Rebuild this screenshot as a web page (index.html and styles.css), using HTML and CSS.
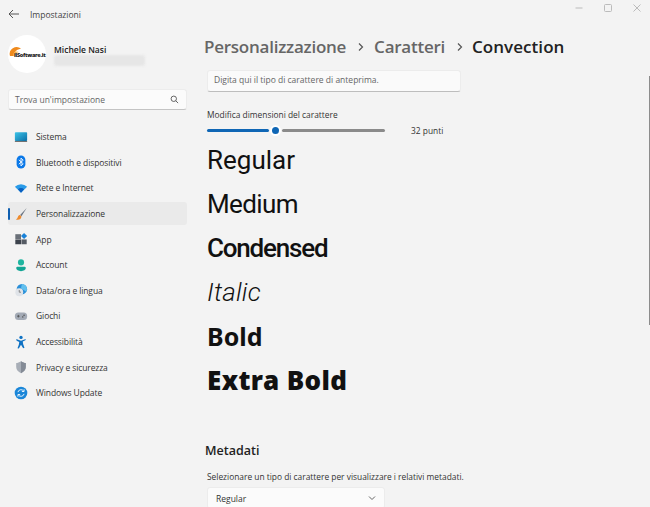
FILE: index.html
```html
<!DOCTYPE html>
<html lang="it">
<head>
    <meta charset="UTF-8">
    <title>Impostazioni</title>
    <link rel="stylesheet" href="styles.css">
</head>
<body>
    <div class="window">
        <header class="titlebar">
            <svg class="back" width="12" height="10" viewBox="0 0 12 10"><path d="M5 1 1 5l4 4M1 5h10" fill="none" stroke="#555" stroke-width="1"/></svg>
            <span class="app-name">Impostazioni</span>
            <div class="controls">
                <svg width="10" height="10" viewBox="0 0 10 10"><path d="M1.500 5h7" stroke="#bbb"/></svg>
                <svg width="10" height="10" viewBox="0 0 10 10"><rect x="1.500" y="1.500" width="7" height="7" rx="1" fill="none" stroke="#bbb"/></svg>
                <svg width="10" height="10" viewBox="0 0 10 10"><path d="M1.500 1.500l7 7M8.500 1.500l-7 7" stroke="#bbb"/></svg>
            </div>
        </header>
        <div class="columns">
            <aside class="sidebar">
                <div class="profile">
                    <div class="avatar">
                        <svg width="38" height="38" viewBox="0 0 38 38">
                            <path d="M2 21a7 7 0 0 1 11-7.500L9 15l-2.500 2.500L5.500 21z" fill="#ef8a1d"/>
                            <path d="M5 21a4 4 0 0 1 6-4l-3 1-1 3z" fill="#f5b04a"/>
                        </svg>
                        <span class="logo-text">ilSoftware.it</span>
                    </div>
                    <div class="who">
                        <span class="who-name">Michele Nasi</span>
                        <span class="who-mail"></span>
                    </div>
                </div>
                <div class="search">
                    <span>Trova un'impostazione</span>
                    <svg width="9" height="9" viewBox="0 0 10 10"><circle cx="4.200" cy="4.200" r="3" fill="none" stroke="#555"/><path d="M6.400 6.400 9 9" stroke="#555"/></svg>
                </div>
                <nav class="nav">
                    <a class="nav-item"><svg width="14" height="14" viewBox="0 0 16 16"><defs><linearGradient id="g1" x1="0" y1="0" x2="1" y2="1"><stop offset="0" stop-color="#3cc4e8"/><stop offset="1" stop-color="#0a6fa8"/></linearGradient></defs><rect x="1" y="2.500" width="14" height="10" rx="1" fill="url(#g1)"/><rect x="1" y="12.500" width="14" height="1" fill="#555"/></svg>Sistema</a>
                    <a class="nav-item"><svg width="14" height="14" viewBox="0 0 16 16"><rect x="3" y="0.500" width="10" height="15" rx="5" fill="#0a78e8"/><path d="M5.500 5.500l5 4.500L8 12.500v-9l2.500 2.500-5 4.500" fill="none" stroke="#fff"/></svg>Bluetooth e dispositivi</a>
                    <a class="nav-item"><svg width="14" height="14" viewBox="0 0 16 16"><path d="M1 6.500a10 10 0 0 1 14 0L8 13.500z" fill="#2a9be8"/><path d="M4.500 9.500a5 5 0 0 1 7 0L8 13.500z" fill="#0a5fc0"/></svg>Rete e Internet</a>
                    <a class="nav-item active"><svg width="14" height="14" viewBox="0 0 16 16"><path d="M14.500 1 7 9l1.500 1.500z" fill="#6a7482"/><path d="M6.500 9C4 9.500 5 13 2 14c3 1.500 6.500 0 6.500-3.500z" fill="#ee8a2c"/></svg>Personalizzazione</a>
                    <a class="nav-item"><svg width="14" height="14" viewBox="0 0 16 16"><rect x="1.500" y="2.500" width="6.500" height="5.500" fill="#6a7078"/><rect x="1.500" y="8.500" width="6.500" height="5.500" fill="#3d434c"/><rect x="8.500" y="8.500" width="6" height="5.500" fill="#555b64"/><path d="M11.500 1 15 4.500 11.500 8 8 4.500z" fill="#1a82d8"/></svg>App</a>
                    <a class="nav-item"><svg width="14" height="14" viewBox="0 0 16 16"><circle cx="8" cy="5" r="3.500" fill="#1fb5a0"/><path d="M2.500 11.500c0-1 1-1.500 2-1.500h7c1 0 2 .5 2 1.500 0 2-2.500 3.500-5.500 3.500s-5.500-1.500-5.500-3.500z" fill="#12a594"/></svg>Account</a>
                    <a class="nav-item"><svg width="14" height="14" viewBox="0 0 16 16"><circle cx="9" cy="7" r="6" fill="#2a8fd8"/><path d="M9 1a6 6 0 0 1 5 9L8 6z" fill="#62c0ee"/><circle cx="6" cy="10.500" r="4.500" fill="#dfe3e8"/><path d="M6 8v2.500h2" fill="none" stroke="#666" stroke-width=".8"/></svg>Data/ora e lingua</a>
                    <a class="nav-item"><svg width="14" height="14" viewBox="0 0 16 16"><rect x="1" y="4" width="14" height="8.500" rx="4" fill="#a3aab5"/><path d="M3.500 8.200h3M5 6.700v3" stroke="#444" stroke-width=".8"/><circle cx="11.500" cy="7.200" r=".8" fill="#444"/><circle cx="10" cy="9" r=".8" fill="#444"/></svg>Giochi</a>
                    <a class="nav-item"><svg width="14" height="14" viewBox="0 0 16 16"><circle cx="8" cy="2.800" r="1.900" fill="#0f72c4"/><path d="M2.500 4.500 8 6.500l5.500-2-.5 1.500-3 1.500.5 3 1.500 4-1.500.5L8 11l-2.500 4.500L4 15l1.500-4 .5-3-3-1.500z" fill="#0f72c4"/></svg>Accessibilità</a>
                    <a class="nav-item"><svg width="14" height="14" viewBox="0 0 16 16"><path d="M8 1.500c2 1.500 4 2 5.500 2v4.500c0 3.500-2.500 5.500-5.500 7-3-1.500-5.500-3.500-5.500-7V3.500c1.500 0 3.500-.5 5.500-2z" fill="#a8aeb7"/><path d="M8 1.500c2 1.500 4 2 5.500 2v4.500c0 3.500-2.500 5.500-5.500 7z" fill="#848b96"/></svg>Privacy e sicurezza</a>
                    <a class="nav-item"><svg width="14" height="14" viewBox="0 0 16 16"><circle cx="8" cy="8" r="7.200" fill="#1a86d8"/><path d="M4.500 7a3.600 3.600 0 0 1 6.500-1.200M11.500 9A3.600 3.600 0 0 1 5 10.200" fill="none" stroke="#fff" stroke-width="1"/><path d="M11.500 3.800v2.500H9M4.500 12.200V9.700H7" fill="none" stroke="#fff" stroke-width="1"/></svg>Windows Update</a>
                </nav>
            </aside>
            <main class="content">
                <h1 class="crumbs">
                    <span class="crumb">Personalizzazione</span>
                    <svg class="sep" width="8" height="10" viewBox="0 0 8 10"><path d="M2 1.500 5.500 5 2 8.500" fill="none" stroke="#555" stroke-width="1.200"/></svg>
                    <span class="crumb">Caratteri</span>
                    <svg class="sep" width="8" height="10" viewBox="0 0 8 10"><path d="M2 1.500 5.500 5 2 8.500" fill="none" stroke="#555" stroke-width="1.200"/></svg>
                    <span class="crumb current">Convection</span>
                </h1>
                <div class="preview-input">Digita qui il tipo di carattere di anteprima.</div>
                <div class="size-label">Modifica dimensioni del carattere</div>
                <div class="size-row">
                    <div class="slider">
                        <span class="track-on"></span>
                        <span class="thumb"></span>
                        <span class="track-off"></span>
                    </div>
                    <span class="size-value">32 punti</span>
                </div>
                <ul class="samples">
                    <li class="regular">Regular</li>
                    <li class="medium">Medium</li>
                    <li class="condensed">Condensed</li>
                    <li class="italic">Italic</li>
                    <li class="bold">Bold</li>
                    <li class="extra">Extra Bold</li>
                </ul>
                <h2 class="meta-title">Metadati</h2>
                <div class="meta-hint">Selezionare un tipo di carattere per visualizzare i relativi metadati.</div>
                <div class="select">
                    <span>Regular</span>
                    <svg width="8" height="6" viewBox="0 0 8 6"><path d="M1 1.500 4 4.500l3-3" fill="none" stroke="#666"/></svg>
                </div>
            </main>
        </div>
        <div class="scrollbar"></div>
    </div>
</body>
</html>
```

FILE: styles.css
```css
html, body {
    margin: 0;
    height: 100%;
    overflow: hidden;
}

body {
    font-family: "Open Sans", "Noto Sans", sans-serif;
    color: #222;
    background-color: #f3f3f3;
}

.window {
    position: relative;
    width: 650px;
    height: 507px;
    overflow: hidden;
}

.titlebar {
    display: flex;
    align-items: center;
    height: 28px;
    padding-left: 8px;
}

.back {
    margin-right: 10px;
}

.app-name {
    font-size: 8.5px;
    color: #444;
}

.controls {
    margin-left: auto;
    display: flex;
    gap: 19px;
    padding-right: 8px;
    margin-top: -12px;
}

.columns {
    display: flex;
}

.sidebar {
    width: 187px;
    padding-left: 8px;
    box-sizing: border-box;
}

.profile {
    display: flex;
    align-items: center;
    gap: 8px;
    padding-top: 7px;
}

.avatar {
    position: relative;
    width: 38px;
    height: 38px;
    border-radius: 50%;
    background-color: white;
}

.logo-text {
    position: absolute;
    left: 6px;
    top: 16px;
    font-size: 5.5px;
    font-weight: 800;
    letter-spacing: -0.3px;
    color: #222;
}

.who {
    display: flex;
    flex-direction: column;
    padding-top: 1px;
}

.who-name {
    font-size: 8.5px;
    font-weight: 600;
    line-height: 13px;
    color: #222;
}

.who-mail {
    width: 91px;
    height: 11px;
    margin-top: -1px;
    background-color: #e6e6e6;
    border-radius: 3px;
    filter: blur(1px);
}

.search {
    display: flex;
    justify-content: space-between;
    align-items: center;
    height: 19px;
    margin-top: 16px;
    padding: 0 7px 0 6px;
    font-size: 8.5px;
    color: #666;
    background-color: #fbfbfb;
    border: 1px solid #ececec;
    border-bottom-color: #c4c4c4;
    border-radius: 3px;
}

.nav {
    display: flex;
    flex-direction: column;
    margin-top: 15px;
}

.nav-item {
    position: relative;
    display: flex;
    align-items: center;
    gap: 8px;
    height: 23.6px;
    margin-bottom: 2px;
    padding-left: 6px;
    font-size: 8.5px;
    letter-spacing: -0.1px;
    color: #333;
    border-radius: 3px;
}

.nav-item.active {
    background-color: #eaeaea;
}

.nav-item.active::before {
    content: "";
    position: absolute;
    left: 0;
    top: 6px;
    height: 12px;
    width: 2px;
    border-radius: 1px;
    background-color: #0f5fb0;
}

.content {
    flex: 1;
    padding-left: 20px;
    margin-top: -1px;
}

.crumbs {
    display: flex;
    align-items: center;
    margin: 8px 0 0 -3px;
    font-size: 17px;
    font-weight: 600;
    letter-spacing: -0.25px;
    line-height: 24px;
    color: #666;
}

.sep {
    margin: 0 9px 0 11px;
}

.sep + .crumb.current {
    margin-left: -1px;
}

.current {
    color: #222;
    letter-spacing: 0.05px;
}

.preview-input {
    width: 246px;
    height: 20px;
    margin-top: 11px;
    padding-left: 6px;
    font-size: 8.5px;
    line-height: 18px;
    color: #666;
    background-color: #fafafa;
    border: 1px solid #ececec;
    border-bottom-color: #bdbdbd;
    border-radius: 3px;
}

.size-label {
    margin-top: 17px;
    font-size: 8.4px;
    line-height: 12px;
    color: #333;
}

.size-row {
    display: flex;
    align-items: center;
    height: 14px;
    margin-top: 2px;
}

.slider {
    display: flex;
    align-items: center;
    width: 178px;
}

.track-on {
    width: 62px;
    height: 3px;
    border-radius: 2px;
    background-color: #0f66b5;
}

.thumb {
    width: 7px;
    height: 7px;
    margin: 0 3px 0 3px;
    border-radius: 50%;
    background-color: #0f66b5;
    box-shadow: 0 0 0 2px #fff;
}

.track-off {
    flex: 1;
    height: 3px;
    border-radius: 2px;
    background-color: #8a8a8a;
}

.size-value {
    margin-left: 26px;
    font-size: 8.4px;
    color: #333;
}

.samples {
    list-style: none;
    margin: 1px 0 0;
    padding: 0;
    font-family: Roboto, "Noto Sans", sans-serif;
    font-size: 26px;
    color: #111;
}

.samples li {
    height: 44px;
    line-height: 44px;
}

.regular {
    font-weight: 400;
}

.medium {
    font-weight: 400;
    letter-spacing: -0.6px;
}

.condensed {
    font-weight: 500;
    letter-spacing: -1.2px;
}

.italic {
    font-style: italic;
    font-weight: 300;
    letter-spacing: 0.2px;
}

.samples .bold {
    font-family: "Noto Sans", sans-serif;
    font-size: 25px;
    font-weight: 700;
}

.samples .extra {
    font-family: "Noto Sans", sans-serif;
    font-weight: 900;
    letter-spacing: 0.4px;
}

.meta-title {
    margin: 40px 0 0 -2px;
    font-size: 12.5px;
    font-weight: 600;
    line-height: 18px;
    color: #222;
}

.meta-hint {
    margin-top: 11px;
    font-size: 8.4px;
    line-height: 12px;
    color: #333;
}

.select {
    display: flex;
    justify-content: space-between;
    align-items: center;
    width: 178px;
    height: 22px;
    margin-top: 4px;
    padding: 0 8px;
    box-sizing: border-box;
    font-size: 8.5px;
    color: #333;
    background-color: #fbfbfb;
    border: 1px solid #ececec;
    border-radius: 3px;
}

.scrollbar {
    position: absolute;
    right: 0;
    top: 76px;
    width: 1px;
    height: 249px;
    background-color: #8c8c8c;
}
```
